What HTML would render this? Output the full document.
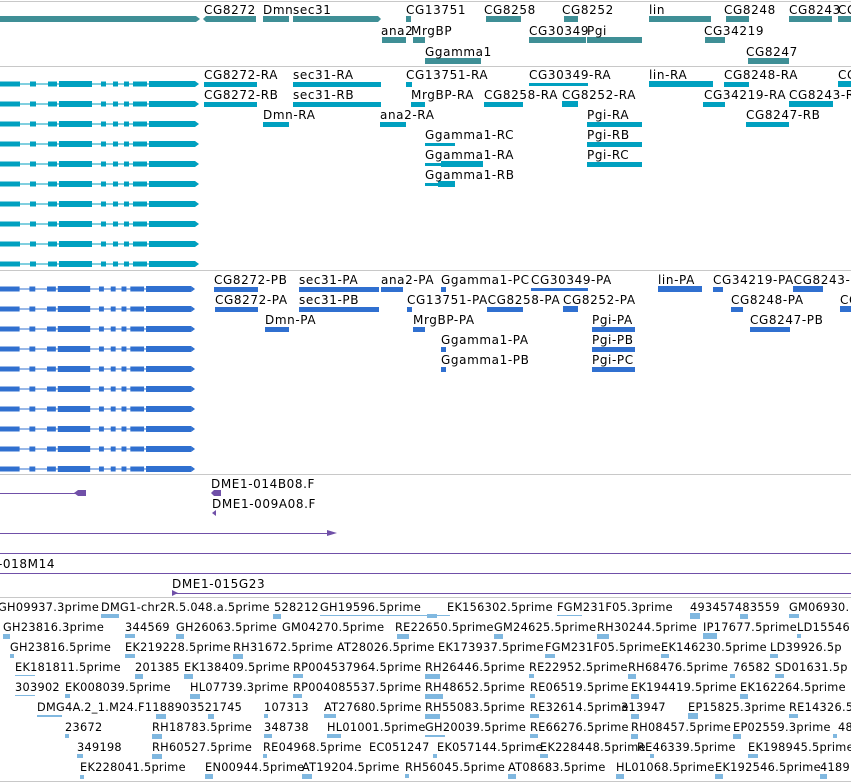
<!DOCTYPE html>
<html><head><meta charset="utf-8"><style>
html,body{margin:0;padding:0;background:#fff;width:851px;height:782px;overflow:hidden}
svg{display:block}
text{font-family:"DejaVu Sans","Liberation Sans",sans-serif;font-size:12px;fill:#000;letter-spacing:0.6px}
.e text{font-size:11.3px;letter-spacing:0.3px}
</style></head><body>
<svg width="851" height="782" viewBox="0 0 851 782" xmlns="http://www.w3.org/2000/svg">
<defs>
<g id="lg">
<rect x="0" y="-0.5" width="197" height="1"/>
<rect x="0" y="-2.5" width="20" height="5"/><rect x="30" y="-2.5" width="6" height="5"/>
<rect x="48" y="-2.5" width="9" height="5"/><rect x="59" y="-3" width="33" height="6"/>
<rect x="101" y="-2.5" width="5" height="5"/><rect x="113" y="-2.5" width="5" height="5"/>
<rect x="124" y="-2.5" width="5" height="5"/><rect x="133" y="-2.5" width="14" height="5"/>
<rect x="149" y="-3" width="46" height="6"/><polygon points="195,-3 199,0 195,3"/>
</g>
</defs>
<g fill="#c8c8c8">
<rect x="0" y="1" width="851" height="1"/><rect x="0" y="66" width="851" height="1"/>
<rect x="0" y="270" width="851" height="1"/><rect x="0" y="474" width="851" height="1"/>
<rect x="0" y="597" width="851" height="1"/><rect x="0" y="781" width="851" height="1"/>
</g>

<g fill="#3f8f96">
<rect x="0" y="16" width="196" height="6"/><polygon points="196,16 200,19 196,22"/>
<rect x="206" y="16" width="50" height="6"/><polygon points="206,16 203,19 206,22"/>
<rect x="263" y="16" width="26" height="6"/><rect x="293" y="16" width="85" height="6"/><polygon points="378,16 381,19 378,22"/>
<rect x="406" y="16" width="5" height="6"/><rect x="486" y="16" width="35" height="6"/><rect x="564" y="16" width="14" height="6"/>
<rect x="649" y="16" width="62" height="6"/><rect x="726" y="16" width="23" height="6"/><rect x="789" y="16" width="43" height="6"/><rect x="838" y="16" width="13" height="6"/>
<rect x="382" y="37" width="24" height="6"/><rect x="413" y="37" width="12" height="6"/><rect x="529" y="37" width="57" height="6"/><rect x="587" y="37" width="55" height="6"/><rect x="705" y="37" width="20" height="6"/>
<rect x="425" y="58" width="56" height="6"/><rect x="748" y="58" width="41" height="6"/>
</g>
<text x="204" y="14">CG8272</text><text x="263" y="14">Dmn</text><text x="293" y="14">sec31</text><text x="406" y="14">CG13751</text><text x="484" y="14">CG8258</text><text x="562" y="14">CG8252</text><text x="649" y="14">lin</text><text x="724" y="14">CG8248</text><text x="789" y="14">CG8243</text><text x="838" y="14">CG</text>
<text x="381" y="35">ana2</text><text x="411" y="35">MrgBP</text><text x="529" y="35">CG30349</text><text x="587" y="35">Pgi</text><text x="704" y="35">CG34219</text>
<text x="425" y="56">Ggamma1</text><text x="746" y="56">CG8247</text>

<g fill="#00a0c0">
<use href="#lg" y="84"/><use href="#lg" y="104"/><use href="#lg" y="124"/><use href="#lg" y="144"/><use href="#lg" y="164"/>
<use href="#lg" y="184"/><use href="#lg" y="204"/><use href="#lg" y="224"/><use href="#lg" y="244"/><use href="#lg" y="264"/>
<rect x="204" y="82" width="53" height="5"/><rect x="293" y="82" width="88" height="5"/><rect x="406" y="82" width="6" height="5"/><rect x="529" y="83" width="59" height="3"/><rect x="649" y="81" width="64" height="6"/><rect x="724" y="82" width="25" height="5"/><rect x="838" y="81" width="13" height="6"/>
<rect x="204" y="102" width="53" height="5"/><rect x="293" y="102" width="88" height="5"/><rect x="411" y="102" width="14" height="5"/><rect x="484" y="102" width="39" height="5"/><rect x="562" y="101" width="16" height="6"/><rect x="703" y="102" width="22" height="5"/><rect x="789" y="101" width="44" height="6"/>
<rect x="263" y="122" width="26" height="5"/><rect x="380" y="122" width="26" height="5"/><rect x="587" y="122" width="55" height="5"/><rect x="746" y="122" width="43" height="5"/>
<rect x="425" y="143" width="30" height="3"/><rect x="587" y="142" width="55" height="5"/>
<rect x="425" y="163" width="58" height="3"/><rect x="441" y="161" width="42" height="6"/><rect x="587" y="162" width="55" height="5"/>
<rect x="425" y="183" width="30" height="3"/><rect x="438" y="181" width="17" height="6"/>
</g>
<text x="204" y="79">CG8272-RA</text><text x="293" y="79">sec31-RA</text><text x="406" y="79">CG13751-RA</text><text x="529" y="79">CG30349-RA</text><text x="649" y="79">lin-RA</text><text x="724" y="79">CG8248-RA</text><text x="838" y="79">CG</text>
<text x="204" y="99">CG8272-RB</text><text x="293" y="99">sec31-RB</text><text x="411" y="99">MrgBP-RA</text><text x="484" y="99">CG8258-RA</text><text x="562" y="99">CG8252-RA</text><text x="704" y="99">CG34219-RA</text><text x="789" y="99">CG8243-R</text>
<text x="263" y="119">Dmn-RA</text><text x="380" y="119">ana2-RA</text><text x="587" y="119">Pgi-RA</text><text x="746" y="119">CG8247-RB</text>
<text x="425" y="139">Ggamma1-RC</text><text x="587" y="139">Pgi-RB</text>
<text x="425" y="159">Ggamma1-RA</text><text x="587" y="159">Pgi-RC</text>
<text x="425" y="179">Ggamma1-RB</text>

<g fill="#3070d0">
<use href="#lg" y="289" transform="scale(0.98,1)"/><use href="#lg" y="309" transform="scale(0.98,1)"/><use href="#lg" y="329" transform="scale(0.98,1)"/><use href="#lg" y="349" transform="scale(0.98,1)"/><use href="#lg" y="369" transform="scale(0.98,1)"/>
<use href="#lg" y="389" transform="scale(0.98,1)"/><use href="#lg" y="409" transform="scale(0.98,1)"/><use href="#lg" y="429" transform="scale(0.98,1)"/><use href="#lg" y="449" transform="scale(0.98,1)"/><use href="#lg" y="469" transform="scale(0.98,1)"/>
<rect x="214" y="287" width="44" height="5"/><rect x="299" y="287" width="80" height="5"/><rect x="381" y="287" width="22" height="5"/><rect x="441" y="287" width="5" height="5"/><rect x="531" y="288" width="57" height="3"/><rect x="658" y="286" width="44" height="6"/><rect x="713" y="287" width="10" height="5"/><rect x="793" y="286" width="30" height="6"/>
<rect x="215" y="307" width="43" height="5"/><rect x="299" y="307" width="80" height="5"/><rect x="407" y="307" width="5" height="5"/><rect x="487" y="307" width="36" height="5"/><rect x="563" y="306" width="15" height="6"/><rect x="731" y="307" width="12" height="5"/><rect x="840" y="306" width="11" height="6"/>
<rect x="265" y="327" width="24" height="5"/><rect x="413" y="327" width="12" height="5"/><rect x="592" y="327" width="43" height="5"/><rect x="750" y="327" width="40" height="5"/>
<rect x="441" y="347" width="5" height="5"/><rect x="592" y="347" width="43" height="5"/>
<rect x="441" y="367" width="5" height="5"/><rect x="592" y="367" width="43" height="5"/>
</g>
<text x="214" y="284">CG8272-PB</text><text x="299" y="284">sec31-PA</text><text x="381" y="284">ana2-PA</text><text x="441" y="284">Ggamma1-PC</text><text x="531" y="284">CG30349-PA</text><text x="658" y="284">lin-PA</text><text x="713" y="284">CG34219-PACG8243-P</text>
<text x="215" y="304">CG8272-PA</text><text x="299" y="304">sec31-PB</text><text x="407" y="304">CG13751-PACG8258-PA</text><text x="563" y="304">CG8252-PA</text><text x="731" y="304">CG8248-PA</text><text x="840" y="304">CG</text>
<text x="265" y="324">Dmn-PA</text><text x="413" y="324">MrgBP-PA</text><text x="592" y="324">Pgi-PA</text><text x="750" y="324">CG8247-PB</text>
<text x="441" y="344">Ggamma1-PA</text><text x="592" y="344">Pgi-PB</text>
<text x="441" y="364">Ggamma1-PB</text><text x="592" y="364">Pgi-PC</text>

<g fill="#7050a8">
<rect x="0" y="493" width="80" height="1"/><rect x="78" y="490" width="8" height="6"/><polygon points="78,490 74,493 78,496"/>
<rect x="214" y="490" width="7" height="6"/><polygon points="214,490 211,493 214,496"/>
<polygon points="216,510 212,513 216,516"/>
<rect x="0" y="533" width="330" height="1"/><polygon points="327,530 337,533 327,536"/>
<rect x="0" y="553" width="851" height="1"/><rect x="0" y="573" width="851" height="1"/>
<rect x="172" y="593" width="679" height="1"/><polygon points="172,590 178,593 172,596"/>
</g>
<text x="211" y="488">DME1-014B08.F</text><text x="212" y="508">DME1-009A08.F</text>
<text x="-2" y="568">-018M14</text><text x="172" y="588">DME1-015G23</text>

<g class="e">
<text x="-2" y="611">GH09937.3prime</text><text x="101" y="611">DMG1-chr2R.5.048.a.5prime</text><text x="274" y="611">528212</text><text x="320" y="611">GH19596.5prime</text><text x="447" y="611">EK156302.5prime</text><text x="557" y="611">FGM231F05.3prime</text><text x="690" y="611">493457483559</text><text x="789" y="611">GM06930.</text>
<text x="3" y="631">GH23816.3prime</text><text x="125" y="631">344569</text><text x="176" y="631">GH26063.5prime</text><text x="282" y="631">GM04270.5prime</text><text x="395" y="631">RE22650.5prime</text><text x="494" y="631">GM24625.5prime</text><text x="597" y="631">RH30244.5prime</text><text x="703" y="631">IP17677.5prime</text><text x="797" y="631">LD15546</text>
<text x="10" y="651">GH23816.5prime</text><text x="125" y="651">EK219228.5prime</text><text x="233" y="651">RH31672.5prime</text><text x="337" y="651">AT28026.5prime</text><text x="438" y="651">EK173937.5prime</text><text x="545" y="651">FGM231F05.5prime</text><text x="661" y="651">EK146230.5prime</text><text x="770" y="651">LD39926.5p</text>
<text x="15" y="671">EK181811.5prime</text><text x="135" y="671">201385</text><text x="184" y="671">EK138409.5prime</text><text x="293" y="671">RP004537964.5prime</text><text x="425" y="671">RH26446.5prime</text><text x="529" y="671">RE22952.5prime</text><text x="628" y="671">RH68476.5prime</text><text x="733" y="671">76582</text><text x="775" y="671">SD01631.5p</text>
<text x="15" y="691">303902</text><text x="65" y="691">EK008039.5prime</text><text x="190" y="691">HL07739.3prime</text><text x="293" y="691">RP004085537.5prime</text><text x="425" y="691">RH48652.5prime</text><text x="530" y="691">RE06519.5prime</text><text x="631" y="691">EK194419.5prime</text><text x="740" y="691">EK162264.5prime</text>
<text x="37" y="711">DMG4A.2_1.M24.F1188903521745</text><text x="264" y="711">107313</text><text x="324" y="711">AT27680.5prime</text><text x="425" y="711">RH55083.5prime</text><text x="530" y="711">RE32614.5prime</text><text x="621" y="711">313947</text><text x="688" y="711">EP15825.3prime</text><text x="789" y="711">RE14326.5</text>
<text x="65" y="731">23672</text><text x="152" y="731">RH18783.5prime</text><text x="264" y="731">348738</text><text x="327" y="731">HL01001.5prime</text><text x="425" y="731">GH20039.5prime</text><text x="530" y="731">RE66276.5prime</text><text x="631" y="731">RH08457.5prime</text><text x="733" y="731">EP02559.3prime</text><text x="838" y="731">48</text>
<text x="77" y="751">349198</text><text x="152" y="751">RH60527.5prime</text><text x="263" y="751">RE04968.5prime</text><text x="369" y="751">EC051247</text><text x="437" y="751">EK057144.5prime</text><text x="540" y="751">EK228448.5prime</text><text x="637" y="751">RE46339.5prime</text><text x="748" y="751">EK198945.5prime</text>
<text x="80" y="771">EK228041.5prime</text><text x="205" y="771">EN00944.5prime</text><text x="302" y="771">AT19204.5prime</text><text x="405" y="771">RH56045.5prime</text><text x="508" y="771">AT08683.5prime</text><text x="616" y="771">HL01068.5prime</text><text x="715" y="771">EK192546.5prime</text><text x="820" y="771">4189</text>
</g>
<g fill="#80b8e0">
<rect x="101" y="614" width="18" height="4"/><rect x="273" y="614" width="8" height="5"/><rect x="320" y="615" width="110" height="1"/><rect x="427" y="614" width="10" height="4"/><rect x="420" y="615" width="30" height="1"/><rect x="557" y="615" width="25" height="1"/><rect x="690" y="613" width="10" height="6"/><rect x="740" y="614" width="8" height="5"/><rect x="789" y="614" width="10" height="4"/>
<rect x="3" y="634" width="7" height="5"/><rect x="125" y="634" width="10" height="4"/><rect x="176" y="634" width="8" height="5"/><rect x="397" y="634" width="12" height="5"/><rect x="494" y="634" width="9" height="5"/><rect x="597" y="634" width="12" height="5"/><rect x="703" y="633" width="14" height="6"/><rect x="797" y="634" width="4" height="4"/>
<rect x="10" y="654" width="4" height="4"/><rect x="125" y="654" width="10" height="4"/><rect x="233" y="654" width="10" height="5"/><rect x="545" y="654" width="10" height="4"/><rect x="661" y="654" width="8" height="4"/><rect x="770" y="654" width="8" height="4"/>
<rect x="15" y="675" width="20" height="1"/><rect x="135" y="674" width="8" height="5"/><rect x="184" y="674" width="9" height="5"/><rect x="293" y="674" width="10" height="4"/><rect x="425" y="674" width="15" height="5"/><rect x="529" y="674" width="5" height="4"/><rect x="628" y="674" width="8" height="5"/><rect x="730" y="674" width="5" height="4"/><rect x="775" y="674" width="9" height="4"/>
<rect x="15" y="695" width="20" height="1"/><rect x="65" y="694" width="5" height="4"/><rect x="190" y="694" width="10" height="5"/><rect x="293" y="694" width="9" height="4"/><rect x="425" y="694" width="18" height="5"/><rect x="530" y="694" width="5" height="4"/><rect x="631" y="694" width="8" height="5"/><rect x="740" y="694" width="8" height="5"/>
<rect x="37" y="715" width="25" height="2"/><rect x="156" y="714" width="10" height="5"/><rect x="208" y="714" width="6" height="5"/><rect x="264" y="714" width="4" height="4"/><rect x="324" y="714" width="12" height="4"/><rect x="425" y="714" width="15" height="5"/><rect x="530" y="714" width="9" height="4"/><rect x="631" y="714" width="8" height="5"/><rect x="688" y="713" width="10" height="6"/><rect x="789" y="714" width="9" height="4"/>
<rect x="65" y="734" width="4" height="4"/><rect x="152" y="734" width="10" height="5"/><rect x="264" y="734" width="8" height="4"/><rect x="327" y="734" width="14" height="4"/><rect x="425" y="735" width="20" height="2"/><rect x="530" y="734" width="8" height="4"/><rect x="631" y="734" width="7" height="5"/><rect x="733" y="734" width="8" height="5"/><rect x="833" y="734" width="4" height="4"/>
<rect x="77" y="754" width="6" height="4"/><rect x="152" y="754" width="10" height="5"/><rect x="263" y="754" width="4" height="4"/><rect x="433" y="754" width="4" height="4"/><rect x="540" y="754" width="8" height="4"/><rect x="650" y="754" width="4" height="4"/><rect x="748" y="754" width="10" height="4"/>
<rect x="80" y="775" width="4" height="4"/><rect x="205" y="774" width="8" height="5"/><rect x="302" y="774" width="10" height="5"/><rect x="405" y="774" width="4" height="4"/><rect x="508" y="774" width="8" height="5"/><rect x="616" y="774" width="8" height="5"/><rect x="715" y="774" width="8" height="5"/><rect x="820" y="774" width="7" height="5"/>
</g>
</svg>
</body></html>
